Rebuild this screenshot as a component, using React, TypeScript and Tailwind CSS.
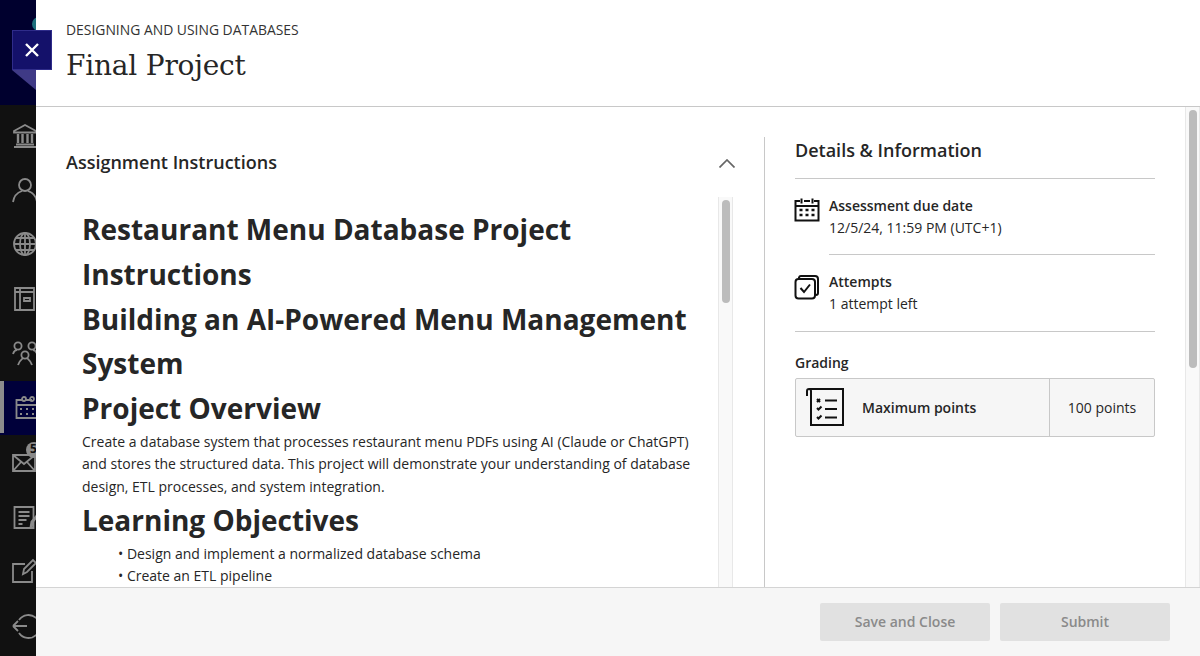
// App.tsx
const sans = "font-['Open_Sans',sans-serif]";

// Sidebar icons are wider than the visible rail, the panel cuts them off on the right
function NavIcon({ children, active }: { children: React.ReactNode; active?: boolean }) {
  return (
    <div className={`relative flex h-[54.5px] shrink-0 items-center pl-[12px] ${active ? "bg-[#00003a]" : ""}`}>
      {active && <div className="absolute top-0 left-0 h-[52px] w-[4px] bg-[#8c8c8c]" />}
      <svg width="26" height="26" viewBox="0 0 26 26" fill="none" stroke="#8a8a8a" strokeWidth="1.8" className="shrink-0">
        {children}
      </svg>
    </div>
  );
}

function CalendarIcon() {
  return (
    <svg width="26" height="26" viewBox="0 0 26 26" fill="none" stroke="#111" strokeWidth="2" className="mt-[2px] ml-[-1px] shrink-0">
      <path d="M6 4H1.5v19.5h23V4H20M10 4h6" />
      <path d="M7.5 1.5v5M18.5 1.5v5M1.5 9h23" />
      <path d="M5.5 13h3M11.5 13h3M17.5 13h3M5.5 18h3M11.5 18h3M17.5 18h3" strokeWidth="2.6" />
    </svg>
  );
}

function Sidebar() {
  return (
    <div className="flex h-full w-[36px] shrink-0 flex-col overflow-hidden bg-[#111111]">
      <div className="relative mb-[3px] h-[105px] shrink-0 bg-[#00002e]">
        <div className="absolute top-[17px] left-[32px] h-[14px] w-[8px] rounded-l-full bg-[#1d6f7d]" />
      </div>
      <NavIcon>
        <path d="M2 9 13 3l11 6v1.5H2zM4 22.5h18M2 25h22" />
        <path d="M6 12v9M10.5 12v9M15.5 12v9M20 12v9" strokeWidth="2.4" />
      </NavIcon>
      <NavIcon>
        <circle cx="13" cy="8" r="6" />
        <path d="M1 25c1-7 6-10 9-11M25 25c-1-7-6-10-9-11" />
      </NavIcon>
      <NavIcon>
        <circle cx="13" cy="13" r="11" />
        <ellipse cx="13" cy="13" rx="5" ry="11" />
        <path d="M13 2v22M2 13h22M4 7h18M4 19h18" />
      </NavIcon>
      <NavIcon>
        <path d="M3 2h19v22H3zM8 2v22M3 6h19" />
        <path d="M12 12h6v3h-6z" />
      </NavIcon>
      <NavIcon>
        <circle cx="6" cy="6" r="3.6" />
        <circle cx="20" cy="6" r="3.6" />
        <circle cx="13" cy="15" r="3.6" />
        <path d="M1 14c1-3 3-4 4-4M25 14c-1-3-3-4-4-4M6 25c1-4 4-6 5-7M20 25c-1-4-4-6-5-7" />
      </NavIcon>
      <NavIcon active>
        <path d="M10 5H4.5v18H30V5h-6M14 5h6" />
        <circle cx="12" cy="4" r="2" />
        <circle cx="20" cy="4" r="2" />
        <path d="M4.5 10H30M8 14h2M14 14h2M20 14h2M8 19h2M14 19h2M20 19h2" />
      </NavIcon>
      <div className="relative">
        <NavIcon>
          <path d="M1 6h22v16H1zM1 6l11 9 11-9M1 22l8-9M23 22l-8-9" />
        </NavIcon>
        <div className="absolute top-[7px] left-[26px] h-[16px] w-[16px] rounded-full bg-[#8a8a8a]">
          <span className={`${sans} absolute top-[-2px] left-[4px] text-[12px] font-bold text-[#111]`}>5</span>
        </div>
      </div>
      <NavIcon>
        <path d="M2.5 3h19v21h-19zM6.5 8h11M6.5 12h11M6.5 16h8M6.5 20h4" />
        <path d="M19 24l1-6 5-6" strokeWidth="3" />
      </NavIcon>
      <NavIcon>
        <path d="M20 13v11H1V6h12" />
        <path d="M11 16l1-5 9-9 3 3-9 9z" />
      </NavIcon>
      <NavIcon>
        <path d="M7 7a11.5 11.5 0 1 1 0 13M1 13h14M1 13l5-5M1 13l5 5" />
      </NavIcon>
    </div>
  );
}

function ScrollTrack({ thumb, className }: { thumb: string; className: string }) {
  return (
    <div className={`flex shrink-0 justify-center border-x border-[#e8e8e8] bg-[#f9f9f9] pt-[3px] ${className}`}>
      <div className={`w-[8px] rounded-full bg-[#bcbcbc] ${thumb}`} />
    </div>
  );
}

function Instructions() {
  return (
    <div className="min-w-0 flex-1 overflow-hidden pt-[10px] pl-[16px] text-[#262626]">
      <h2 className="text-[28px] leading-[44.8px] font-bold">Restaurant Menu Database Project Instructions</h2>
      <h2 className="text-[28px] leading-[44.8px] font-bold">Building an AI-Powered Menu Management System</h2>
      <h2 className="text-[28px] leading-[44.8px] font-bold">Project Overview</h2>
      <p className="w-[620px] text-[14px] leading-[22.5px]">
        Create a database system that processes restaurant menu PDFs using AI (Claude or ChatGPT) and stores the
        structured data. This project will demonstrate your understanding of database design, ETL processes, and system
        integration.
      </p>
      <h2 className="text-[28px] leading-[44.8px] font-bold">Learning Objectives</h2>
      <ul className="pl-[36px] text-[14px] leading-[22px]">
        <li>• Design and implement a normalized database schema</li>
        <li>• Create an ETL pipeline</li>
      </ul>
    </div>
  );
}

export default function App() {
  return (
    <div className={`${sans} relative flex h-[656px] w-[1200px] overflow-hidden bg-white`}>
      <Sidebar />

      <div className="flex min-w-0 flex-1 flex-col">
        <header className="h-[107px] shrink-0 border-b border-[#c8c8c8] pt-[20px] pl-[30px] text-[#262626]">
          <div className="text-[13.9px] leading-[20px] text-[#333]">DESIGNING AND USING DATABASES</div>
          <h1 className="mt-[4px] font-['DejaVu_Serif',serif] text-[28px] leading-[44px] tracking-[-0.2px]">Final Project</h1>
        </header>

        <div className="flex min-h-0 flex-1">
          {/* left column */}
          <div className="mt-[30px] flex w-[729px] shrink-0 flex-col border-r border-[#c8c8c8] pr-[31px] pl-[30px]">
            <div className="flex h-[60px] shrink-0 items-start justify-between">
              <h3 className="pt-[13px] text-[18px] leading-[25px] font-semibold text-[#262626]">Assignment Instructions</h3>
              <svg width="16" height="9" viewBox="0 0 16 9" fill="none" stroke="#666" strokeWidth="1.7" className="mt-[22px] mr-[-2px]">
                <path d="M.5 8.5 8 1l7.5 7.5" />
              </svg>
            </div>
            <div className="flex min-h-0 flex-1">
              <Instructions />
              <ScrollTrack className="w-[15px]" thumb="h-[103px]" />
            </div>
          </div>

          {/* details column */}
          <div className="min-w-0 flex-1 overflow-hidden pt-[30px] pr-[30px] pl-[30px] text-[#262626]">
            <h3 className="border-b border-[#c8c8c8] pb-[14px] text-[18px] leading-[27px] font-semibold">Details &amp; Information</h3>
            <div className="flex gap-[9px] pt-[16px]">
              <CalendarIcon />
              <div className="flex-1 border-b border-[#c8c8c8] pb-[15px] text-[14px] leading-[22px]">
                <div className="font-semibold">Assessment due date</div>
                <div>12/5/24, 11:59 PM (UTC+1)</div>
              </div>
            </div>
            <div className="flex gap-[9px] border-b border-[#c8c8c8] pt-[16px] pb-[16px]">
              <svg width="26" height="26" viewBox="0 0 26 26" fill="none" stroke="#111" strokeWidth="2" className="mt-[3px] ml-[-1px] shrink-0">
                <path d="M5 5V3.5A2 2 0 0 1 7 2h14a3 3 0 0 1 3 3v14a2 2 0 0 1-2 2" />
                <rect x="1.5" y="5" width="19.5" height="19.5" rx="3" />
                <path d="m6.5 14 3.5 4 6-7.5" />
              </svg>
              <div className="flex-1 text-[14px] leading-[22px]">
                <div className="font-semibold">Attempts</div>
                <div>1 attempt left</div>
              </div>
            </div>
            <div className="pt-[21px] pb-[5px] text-[14px] leading-[20px] font-semibold">Grading</div>
            <div className="flex h-[59px] items-stretch rounded-[2px] border border-[#c8c8c8] bg-[#f6f6f6] text-[14px]">
              <div className="flex flex-1 items-center gap-[18px] border-r border-[#c8c8c8] pl-[10px]">
                <svg width="38" height="40" viewBox="0 0 38 40" fill="none" stroke="#111" strokeWidth="2" className="shrink-0">
                  <path d="M1 8V3a2 2 0 0 1 4 0v34h32V1H3" />
                  <path d="M11 11l3 3M14 11l-3 3M11 20l1.5 1.5 3-3M11 29l1.5 1.5 3-3M19 12.5h12M19 21h12M19 29.5h12" />
                </svg>
                <span className="font-semibold">Maximum points</span>
              </div>
              <div className="flex w-[104px] items-center justify-center">100 points</div>
            </div>
          </div>

          <ScrollTrack className="w-[15px]" thumb="h-[258px]" />
        </div>

        <footer className="flex h-[69px] shrink-0 items-start justify-end gap-[10px] border-t border-[#d4d4d4] bg-[#f6f6f6] pt-[15px] pr-[30px]">
          <button className="h-[38px] w-[170px] rounded-[2px] bg-[#e1e1e1] pb-[1px] text-[14px] font-semibold text-[#8a8a8a]">Save and Close</button>
          <button className="h-[38px] w-[170px] rounded-[2px] bg-[#e1e1e1] pb-[1px] text-[14px] font-semibold text-[#8a8a8a]">Submit</button>
        </footer>
      </div>

      {/* close button floats over the panel edge */}
      <div className="absolute top-[70px] left-[12px] h-0 w-0 border-t-[20px] border-l-[24px] border-t-[#3f3a86] border-l-transparent" />
      <button className="absolute top-[30px] left-[12px] flex h-[40px] w-[40px] items-center justify-center border border-[#2f2c8a] bg-[#14116a]">
        <svg width="16" height="16" viewBox="0 0 16 16" stroke="#fff" strokeWidth="2.4">
          <path d="M2 2l12 12M14 2 2 14" />
        </svg>
      </button>
    </div>
  );
}
